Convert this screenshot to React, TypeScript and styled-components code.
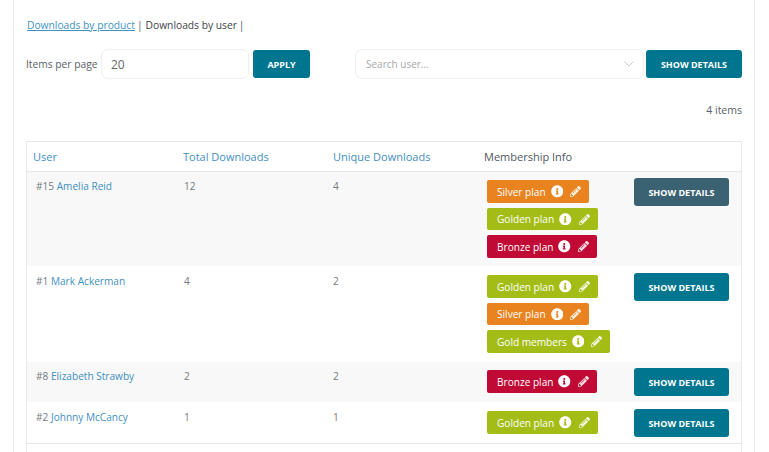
import React from "react";
import styled, { createGlobalStyle } from "styled-components";
import { FaInfoCircle, FaPencilAlt } from "react-icons/fa";

const Global = createGlobalStyle`
  html, body { margin: 0; padding: 0; background: #fff; }
  body { font-family: "Open Sans", "Noto Sans", sans-serif; color: #50575e; font-size: 11px; }
`;

const Page = styled.div`
  width: 769px; height: 452px; overflow: hidden; box-sizing: border-box;
  padding-left: 13px;
`;
const Panel = styled.div`
  width: 742px; height: 452px; box-sizing: border-box; overflow: hidden;
  border-left: 1px solid #e8e8e8; border-right: 1px solid #e8e8e8;
  padding: 17px 12px 0 12px;
`;
const Tabs = styled.div`
  display: flex; height: 16px; align-items: center; line-height: 16px; color: #3c434a; font-size: 10.25px;
`;
const TabLink = styled.a`
  color: #3f94c4; text-decoration: underline; margin-left: 1px;
`;
const Separator = styled.span<{ $gap: number }>`
  margin: 0 ${(p) => p.$gap}px 0 2px; color: #50575e;
`;
const Filters = styled.div`
  display: flex; align-items: center; margin-top: 16px; height: 30px;
`;
const Label = styled.span`
  font-size: 10.25px; color: #5a6168; width: 75px; flex: none; white-space: nowrap;
`;
const PerPage = styled.div`
  width: 148px; height: 30px; box-sizing: border-box; border: 1px solid #efefef; border-radius: 7px;
  padding-left: 9px; display: flex; align-items: center; font-size: 12px; color: #666;
`;
const Button = styled.button<{ $w: number; $active?: boolean }>`
  width: ${(p) => p.$w}px; height: 28px; flex: none; border: 0; border-radius: 3px; padding: 0;
  background: ${(p) => (p.$active ? "#3b6273" : "#00758f")}; color: #fff;
  font: 700 9px "Open Sans", sans-serif; letter-spacing: 0; text-transform: uppercase;
`;
const ApplyButton = styled(Button)`
  margin-left: 4px;
`;
const Search = styled.div`
  margin-left: 45px; width: 289px; height: 30px; box-sizing: border-box; border: 1px solid #efefef; border-radius: 7px;
  padding: 0 9px 0 10px; display: flex; align-items: center; justify-content: space-between; color: #a8a8a8; font-size: 10px;
`;
const SearchButton = styled(Button)`
  margin-left: 2px;
`;
const Count = styled.div`
  text-align: right; font-size: 10.5px; color: #5a6168; margin-top: 24px; height: 15px; line-height: 15px;
`;
const Table = styled.div`
  margin-top: 23px; border: 1px solid #e8e8e8; border-bottom: 0; width: 716px; box-sizing: border-box;
`;
const Head = styled.div`
  display: grid; grid-template-columns: 150px 150px 151px 1fr; height: 30px; box-sizing: border-box; align-items: center;
  border-bottom: 1px solid #e8e8e8; font-size: 11px;
`;
const HeadCell = styled.div<{ $plain?: boolean }>`
  padding-left: 6px; color: ${(p) => (p.$plain ? "#50575e" : "#3f8fbf")};
`;
const Row = styled.div<{ $h: number; $alt?: boolean; $offset: number }>`
  display: grid; grid-template-columns: 150px 150px 150px 157px 1fr; height: ${(p) => p.$h}px;
  box-sizing: border-box; padding-top: ${(p) => p.$offset}px;
  background: ${(p) => (p.$alt ? "#f8f8f8" : "#fff")};
`;
const Cell = styled.div<{ $pad: number }>`
  padding: 7px 0 0 ${(p) => p.$pad}px; font-size: 10.1px; line-height: 15px; color: #747a80;
`;
const UserLink = styled.a`
  color: #3f8fbf;
`;
const Badges = styled.div`
  display: flex; flex-direction: column; align-items: flex-start; gap: 5.1px; padding: 8.4px 0 0 10px;
`;
const Badge = styled.div<{ $c: string }>`
  height: 22.4px; box-sizing: border-box; background: ${(p) => p.$c}; border-radius: 2px; color: #fff;
  display: flex; align-items: center; padding: 0 8px 0 10px; font-size: 10.1px;
`;
const Info = styled(FaInfoCircle)`
  width: 12.5px; height: 12.5px; margin-left: 5px; flex: none;
`;
const Edit = styled(FaPencilAlt)`
  width: 11px; height: 11px; margin-left: 7px; flex: none; opacity: 0.85;
`;
const Action = styled.div`
  padding-top: 6px;
`;
const Foot = styled.div`
  border-top: 1px solid #e8e8e8; height: 20px;
`;

const colors: Record<string, string> = {
  "Silver plan": "#e8831f",
  "Golden plan": "#a3bd16",
  "Bronze plan": "#c00a35",
  "Gold members": "#a3bd16",
};

function Plan({ name }: { name: string }) {
  return (
    <Badge $c={colors[name]}>
      {name}
      <Info />
      <Edit />
    </Badge>
  );
}

const rows = [
  { id: "#15", name: "Amelia Reid", total: 12, unique: 4, plans: ["Silver plan", "Golden plan", "Bronze plan"], h: 94, alt: true, active: true, offset: 0 },
  { id: "#1", name: "Mark Ackerman", total: 4, unique: 2, plans: ["Golden plan", "Silver plan", "Gold members"], h: 96, alt: false, active: false, offset: 1 },
  { id: "#8", name: "Elizabeth Strawby", total: 2, unique: 2, plans: ["Bronze plan"], h: 40, alt: true, active: false, offset: 0 },
  { id: "#2", name: "Johnny McCancy", total: 1, unique: 1, plans: ["Golden plan"], h: 41, alt: false, active: false, offset: 1 },
];

export default function App() {
  return (
    <Page>
      <Global />
      <Panel>
        <Tabs>
          <TabLink>Downloads by product</TabLink>
          <Separator $gap={3}>|</Separator>
          <span>Downloads by user</span>
          <Separator $gap={0}>|</Separator>
        </Tabs>
        <Filters>
          <Label>Items per page</Label>
          <PerPage>20</PerPage>
          <ApplyButton $w={57}>Apply</ApplyButton>
          <Search>
            Search user...
            <svg width="10" height="6" viewBox="0 0 10 6">
              <path d="M.5.5 5 5 9.5.5" fill="none" stroke="#c8c8c8" strokeWidth="1" />
            </svg>
          </Search>
          <SearchButton $w={96}>Show details</SearchButton>
        </Filters>
        <Count>4 items</Count>
        <Table>
          <Head>
            <HeadCell>User</HeadCell>
            <HeadCell>Total Downloads</HeadCell>
            <HeadCell>Unique Downloads</HeadCell>
            <HeadCell $plain>Membership Info</HeadCell>
          </Head>
          {rows.map((r) => (
            <Row key={r.id} $h={r.h} $alt={r.alt} $offset={r.offset}>
              <Cell $pad={9}>
                {r.id} <UserLink>{r.name}</UserLink>
              </Cell>
              <Cell $pad={7}>{r.total}</Cell>
              <Cell $pad={6}>{r.unique}</Cell>
              <Badges>
                {r.plans.map((p) => (
                  <Plan key={p} name={p} />
                ))}
              </Badges>
              <Action>
                <Button $w={95} $active={r.active}>Show details</Button>
              </Action>
            </Row>
          ))}
          <Foot />
        </Table>
      </Panel>
    </Page>
  );
}
